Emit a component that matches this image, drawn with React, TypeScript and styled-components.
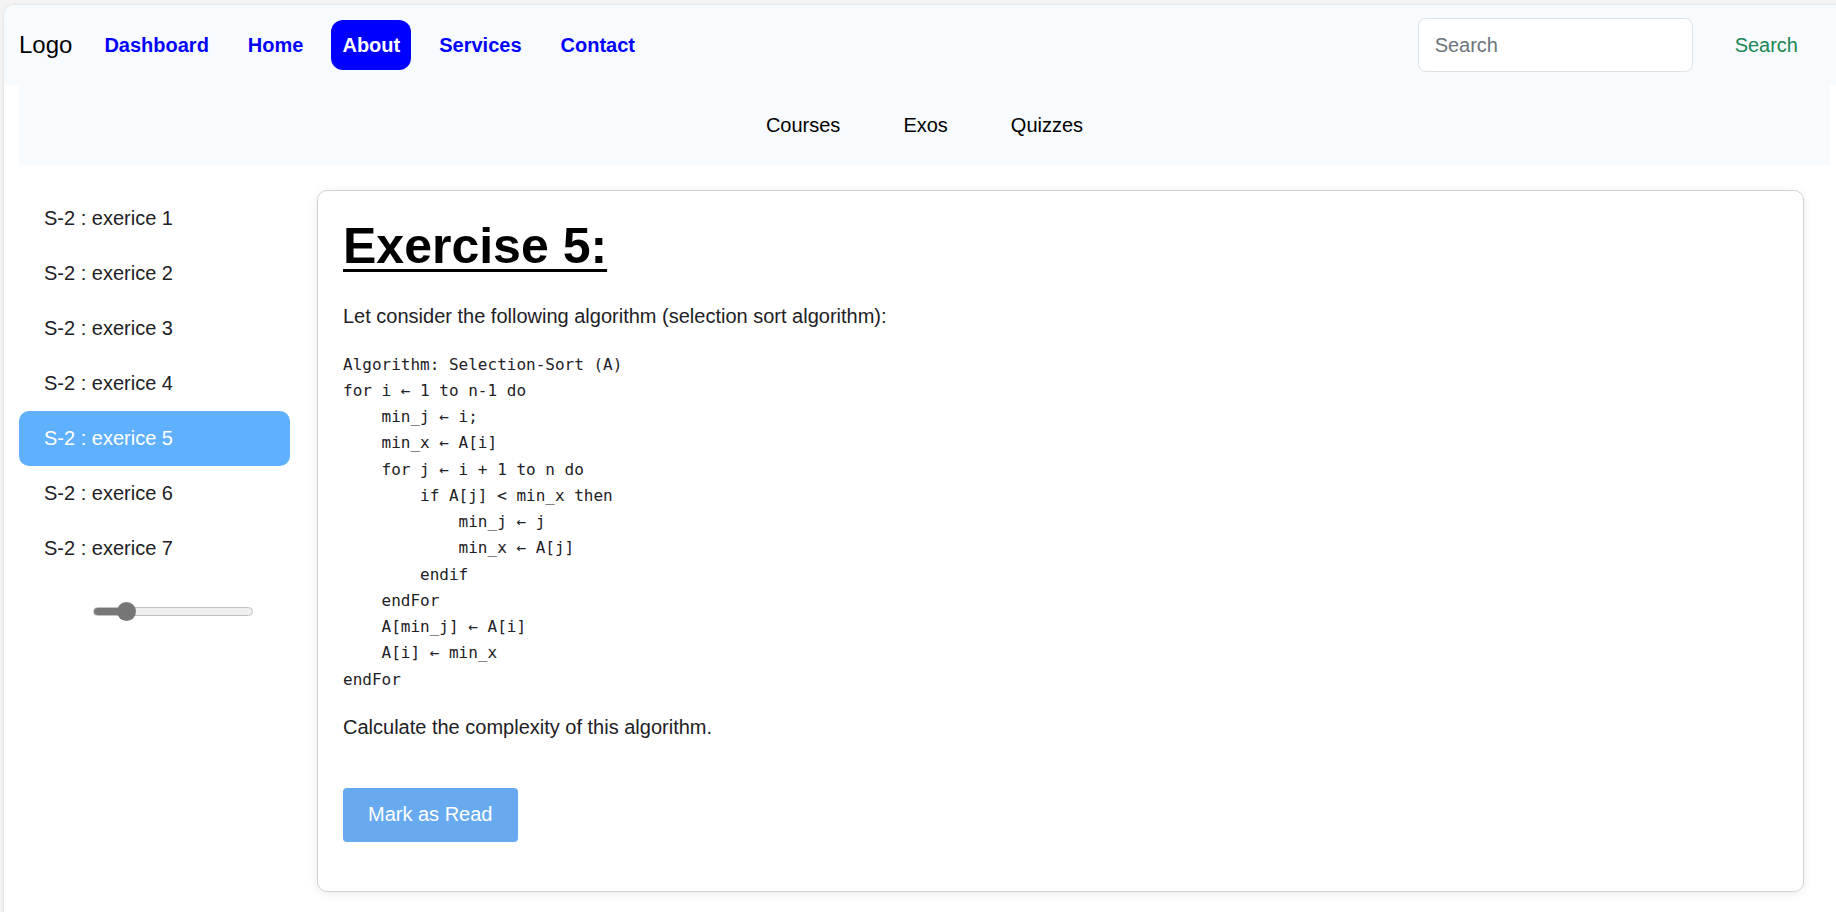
import React, { useState } from "react";
import styled, { createGlobalStyle } from "styled-components";

const GlobalStyle = createGlobalStyle`
  html, body {
    margin: 0;
    padding: 0;
    background: #f4f4f4;
    font-family: "Liberation Sans", Arial, sans-serif;
    overflow: hidden;
  }
  * { box-sizing: border-box; }
`;

const Shell = styled.div`
  margin: 5px 0 0 4px;
  min-height: 920px;
  background: #ffffff;
  border-radius: 10px 0 0 0;
  box-shadow: 0 0 3px rgba(0, 0, 0, 0.14);
  overflow: hidden;
`;

const TopBar = styled.header`
  display: flex;
  align-items: center;
  height: 80px;
  padding: 0 26px 0 15px;
  background: #f7fbfe;
`;

const Brand = styled.div`
  font-size: 24px;
  color: #000;
  margin-right: 21px;
`;

const NavList = styled.nav`
  display: flex;
  align-items: center;
  gap: 17px;
`;

const NavLink = styled.a<{ $active?: boolean }>`
  display: flex;
  align-items: center;
  height: 50px;
  padding: 0 11px;
  border-radius: 12px;
  font-size: 20px;
  font-weight: 700;
  text-decoration: none;
  color: ${(p) => (p.$active ? "#ffffff" : "#0000ff")};
  background: ${(p) => (p.$active ? "#0000ff" : "transparent")};
  cursor: pointer;
`;

const SearchForm = styled.form`
  margin-left: auto;
  display: flex;
  align-items: center;
`;

const SearchInput = styled.input`
  width: 275px;
  height: 54px;
  padding: 0 16px;
  border: 1px solid #dee2e6;
  border-radius: 8px;
  background: #fff;
  font-family: "Liberation Sans", Arial, sans-serif;
  font-size: 20px;
  color: #212529;
  outline: none;
  &::placeholder { color: #6c757d; }
`;

const SearchButton = styled.button`
  margin-left: 30px;
  padding: 6px 12px;
  border: none;
  background: transparent;
  color: #198754;
  font-family: "Liberation Sans", Arial, sans-serif;
  font-size: 20px;
  cursor: pointer;
`;

const SubBar = styled.div`
  display: flex;
  justify-content: center;
  align-items: center;
  gap: 63px;
  height: 80px;
  margin: 0 6px 0 15px;
  background: #f7fbfe;
`;

const SubLink = styled.a`
  font-size: 20px;
  color: #000;
  text-decoration: none;
  cursor: pointer;
`;

const Main = styled.main`
  display: flex;
  align-items: flex-start;
  gap: 27px;
  padding: 25px 32px 0 15px;
`;

const Sidebar = styled.aside`
  width: 271px;
  flex-shrink: 0;
  display: flex;
  flex-direction: column;
  padding-top: 1px;
`;

const SideItem = styled.div<{ $active?: boolean }>`
  height: 55px;
  display: flex;
  align-items: center;
  padding-left: 25px;
  border-radius: 10px;
  font-size: 20px;
  color: ${(p) => (p.$active ? "#ffffff" : "#1e2125")};
  background: ${(p) => (p.$active ? "#5fb1ff" : "transparent")};
  cursor: pointer;
`;

const Range = styled.input<{ $pct: number }>`
  -webkit-appearance: none;
  appearance: none;
  width: 160px;
  height: 9px;
  margin: 31px 0 0 74px;
  border: 1px solid #c2c2c2;
  border-radius: 5px;
  background: linear-gradient(
    to right,
    #767676 0,
    #767676 ${(p) => p.$pct}%,
    #efefef ${(p) => p.$pct}%,
    #efefef 100%
  );
  outline: none;
  &::-webkit-slider-thumb {
    -webkit-appearance: none;
    appearance: none;
    width: 19px;
    height: 19px;
    border-radius: 50%;
    background: #767676;
    border: none;
    cursor: pointer;
  }
`;

const Card = styled.section`
  flex: 1;
  background: #fff;
  border: 1px solid #d2d2d2;
  border-radius: 10px;
  box-shadow: 0 2px 10px rgba(0, 0, 0, 0.08);
  padding: 26px 26px 49px 25px;
`;

const Title = styled.h1`
  margin: 0 0 30px;
  font-size: 50px;
  font-weight: 700;
  color: #000;
  text-decoration: underline;
  text-decoration-thickness: 3px;
  text-underline-offset: 6px;
`;

const Text = styled.p`
  margin: 0;
  font-size: 20px;
  line-height: 23px;
  color: #1e2125;
`;

const Code = styled.pre`
  margin: 23.5px 0;
  font-family: "DejaVu Sans Mono", "Liberation Mono", monospace;
  font-size: 16px;
  line-height: 26.25px;
  color: #1e2125;
`;

const ReadButton = styled.button`
  margin-top: 48.5px;
  height: 54px;
  padding: 0 25px;
  border: none;
  border-radius: 4px;
  background: #68aaef;
  color: #ffffff;
  font-family: "Liberation Sans", Arial, sans-serif;
  font-size: 20px;
  cursor: pointer;
`;

const links = ["Dashboard", "Home", "About", "Services", "Contact"];
const subLinks = ["Courses", "Exos", "Quizzes"];
const exercises = [1, 2, 3, 4, 5, 6, 7];

const code = `Algorithm: Selection-Sort (A)
for i \u2190 1 to n-1 do
    min_j \u2190 i;
    min_x \u2190 A[i]
    for j \u2190 i + 1 to n do
        if A[j] < min_x then
            min_j \u2190 j
            min_x \u2190 A[j]
        endif
    endFor
    A[min_j] \u2190 A[i]
    A[i] \u2190 min_x
endFor`;

export default function App() {
  const [zoom, setZoom] = useState(1);
  const pct = (zoom / 6) * 100;
  return (
    <>
      <GlobalStyle />
      <Shell>
        <TopBar>
          <Brand>Logo</Brand>
          <NavList>
            {links.map((l) => (
              <NavLink key={l} $active={l === "About"}>
                {l}
              </NavLink>
            ))}
          </NavList>
          <SearchForm onSubmit={(e) => e.preventDefault()}>
            <SearchInput placeholder="Search" />
            <SearchButton type="submit">Search</SearchButton>
          </SearchForm>
        </TopBar>
        <SubBar>
          {subLinks.map((s) => (
            <SubLink key={s}>{s}</SubLink>
          ))}
        </SubBar>
        <Main>
          <Sidebar>
            {exercises.map((n) => (
              <SideItem key={n} $active={n === 5}>
                S-2 : exerice {n}
              </SideItem>
            ))}
            <Range
              type="range"
              min={0}
              max={6}
              value={zoom}
              $pct={pct}
              onChange={(e) => setZoom(Number(e.target.value))}
            />
          </Sidebar>
          <Card>
            <Title>Exercise 5:</Title>
            <Text>Let consider the following algorithm (selection sort algorithm):</Text>
            <Code>{code}</Code>
            <Text>Calculate the complexity of this algorithm.</Text>
            <ReadButton>Mark as Read</ReadButton>
          </Card>
        </Main>
      </Shell>
    </>
  );
}
